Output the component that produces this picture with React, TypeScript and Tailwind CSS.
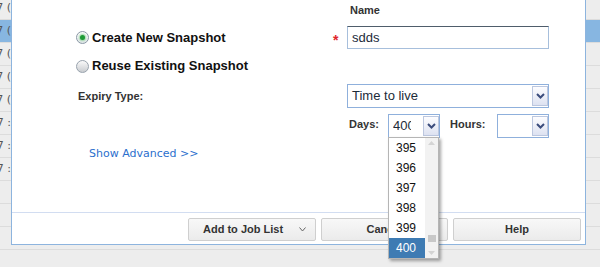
import React from "react";

function Arrow() {
  return (
    <div className="w-[16px] h-[20px] shrink-0 border border-[#bcc7df] bg-gradient-to-b from-[#fdfdff] to-[#dde2f1] flex items-center justify-center">
      <svg width="9" height="6" viewBox="0 0 9 6">
        <path d="M1 1 L4.5 4.5 L8 1" fill="none" stroke="#3b4c7c" strokeWidth="2" />
      </svg>
    </div>
  );
}

function RadioOn() {
  return (
    <div className="w-[13px] h-[13px] rounded-full border border-[#8b98a6] bg-gradient-to-b from-[#ffffff] to-[#e3e7ec] flex items-center justify-center shrink-0">
      <div className="w-[5px] h-[5px] rounded-full bg-[#1f9a36] shadow-[0_0_2px_1px_rgba(110,200,120,0.7)]" />
    </div>
  );
}

function RadioOff() {
  return (
    <div className="w-[13px] h-[13px] rounded-full border border-[#98a2ad] bg-gradient-to-b from-[#fafafa] to-[#c9ccd0] shrink-0" />
  );
}

export default function App() {
  const rows = Array.from({ length: 12 });
  const items = ["395", "396", "397", "398", "399", "400"];
  return (
    <div className="relative w-[600px] h-[267px] overflow-hidden bg-[#ededed] font-['Liberation_Sans',Arial,sans-serif]">
      <div className="-mt-[3px] flex flex-col">
        {rows.map((_, i) => (
          <div
            key={i}
            className={`h-[23px] border-b border-[#dcdcdc] flex items-center ${i === 1 ? "bg-[#87b6e1]" : ""}`}
          >
            <div className="w-[11px] overflow-hidden flex justify-end whitespace-nowrap text-[11px] text-[#555] font-['DejaVu_Sans',sans-serif]">
              {i < 8 ? (i < 5 ? "2017 (" : "2017 :") : ""}
            </div>
          </div>
        ))}
      </div>

      <div className="absolute left-[11px] top-[-10px] w-[575px] h-[255px] bg-white border border-[#8db4de] flex flex-col">
        <div className="flex-1 flex flex-col pl-[64px]">
          <div className="ml-[274px] mt-[12px] h-[14px] leading-[14px] text-[11px] font-bold text-[#333]">Name</div>

          <div className="mt-[9px] h-[23px] flex items-center">
            <div className="w-[257px] flex items-center gap-[3px]">
              <RadioOn />
              <span className="font-bold text-[13px] text-[#111] whitespace-nowrap">Create New Snapshot</span>
            </div>
            <div className="w-[14px] text-[14px] font-bold text-[#e0242a] leading-none pt-[4px]">*</div>
            <div className="w-[202px] h-[23px] border border-[#a7bfdc] border-t-[#4f5d6b] pl-[4px] text-[13px] text-[#1c2b39] flex items-center">sdds</div>
          </div>

          <div className="mt-[10px] h-[14px] flex items-center gap-[3px]">
            <RadioOff />
            <span className="font-bold text-[13px] text-[#111] whitespace-nowrap">Reuse Existing Snapshot</span>
          </div>

          <div className="mt-[11px] h-[24px] flex items-center">
            <div className="w-[271px] pl-[2px] text-[11px] font-bold text-[#333]">Expiry Type:</div>
            <div className="w-[202px] h-[24px] border border-[#8fb0dc] flex items-center">
              <div className="flex-1 pl-[4px] text-[13px] text-[#1c2b39]">Time to live</div>
              <Arrow />
            </div>
          </div>

          <div className="mt-[6px] h-[24px] flex items-center">
            <div className="ml-[273px] w-[39px] text-[11px] font-bold text-[#333] -mt-[3px]">Days:</div>
            <div className="relative w-[52px] h-[24px] border border-[#8fb0dc] flex items-center">
              <div className="ml-[4px] w-[18px] overflow-hidden whitespace-nowrap text-[13px] text-[#1c2b39]">400</div>
              <div className="flex-1" />
              <Arrow />
              <div className="absolute z-10 left-[-1px] top-[22px] w-[51px] h-[122px] bg-white border border-[#b5b5b5] shadow-[2px_2px_3px_rgba(0,0,0,0.35)] flex">
                <div className="w-[36px] flex flex-col">
                  {items.map((n) => (
                    <div
                      key={n}
                      className={`h-[20px] leading-[20px] pl-[7px] text-[12px] ${n === "400" ? "bg-[#3e7bb3] text-white" : "text-[#111]"}`}
                    >
                      {n}
                    </div>
                  ))}
                </div>
                <div className="w-[13px] bg-[#f2f2f2] flex flex-col items-center justify-between py-[3px]">
                  <svg width="7" height="4" viewBox="0 0 7 4"><path d="M0 4 L3.5 0 L7 4 Z" fill="#d4d4d4" /></svg>
                  <div className="flex-1" />
                  <div className="w-[8px] h-[7px] bg-[#c8c8c8] mb-[9px]" />
                  <svg width="7" height="4" viewBox="0 0 7 4"><path d="M0 0 L3.5 4 L7 0 Z" fill="#d4d4d4" /></svg>
                </div>
              </div>
            </div>
            <div className="ml-[10px] w-[47px] text-[11px] font-bold text-[#333] -mt-[3px]">Hours:</div>
            <div className="w-[52px] h-[24px] border border-[#8fb0dc] flex items-center justify-end">
              <Arrow />
            </div>
          </div>

          <div className="mt-[9px] ml-[13px] h-[14px] leading-[14px] text-[11px] text-[#2b6fcd] font-['DejaVu_Sans',sans-serif]">Show Advanced &gt;&gt;</div>
        </div>

        <div className="h-[32px] border-t border-[#d2ddf1] flex justify-end gap-[5px] pr-[4px] pt-[5px]">
          <div className="w-[128px] h-[23px] border border-[#cfcfcf] rounded-[2px] bg-gradient-to-b from-[#f8f8f8] to-[#ebebeb] flex items-center pl-[14px] pr-[9px] text-[11px] font-bold text-[#333]">
            <span>Add to Job List</span>
            <div className="flex-1" />
            <svg width="7" height="5" viewBox="0 0 7 5"><path d="M0.5 0.5 L3.5 4 L6.5 0.5" fill="none" stroke="#666" strokeWidth="1" /></svg>
          </div>
          <div className="w-[127px] h-[23px] border border-[#cfcfcf] rounded-[2px] bg-gradient-to-b from-[#f8f8f8] to-[#ebebeb] flex items-center justify-center text-[11px] font-bold text-[#333]">Cancel</div>
          <div className="w-[128px] h-[23px] border border-[#cfcfcf] rounded-[2px] bg-gradient-to-b from-[#f8f8f8] to-[#ebebeb] flex items-center justify-center text-[11px] font-bold text-[#333]">Help</div>
        </div>
      </div>
    </div>
  );
}
